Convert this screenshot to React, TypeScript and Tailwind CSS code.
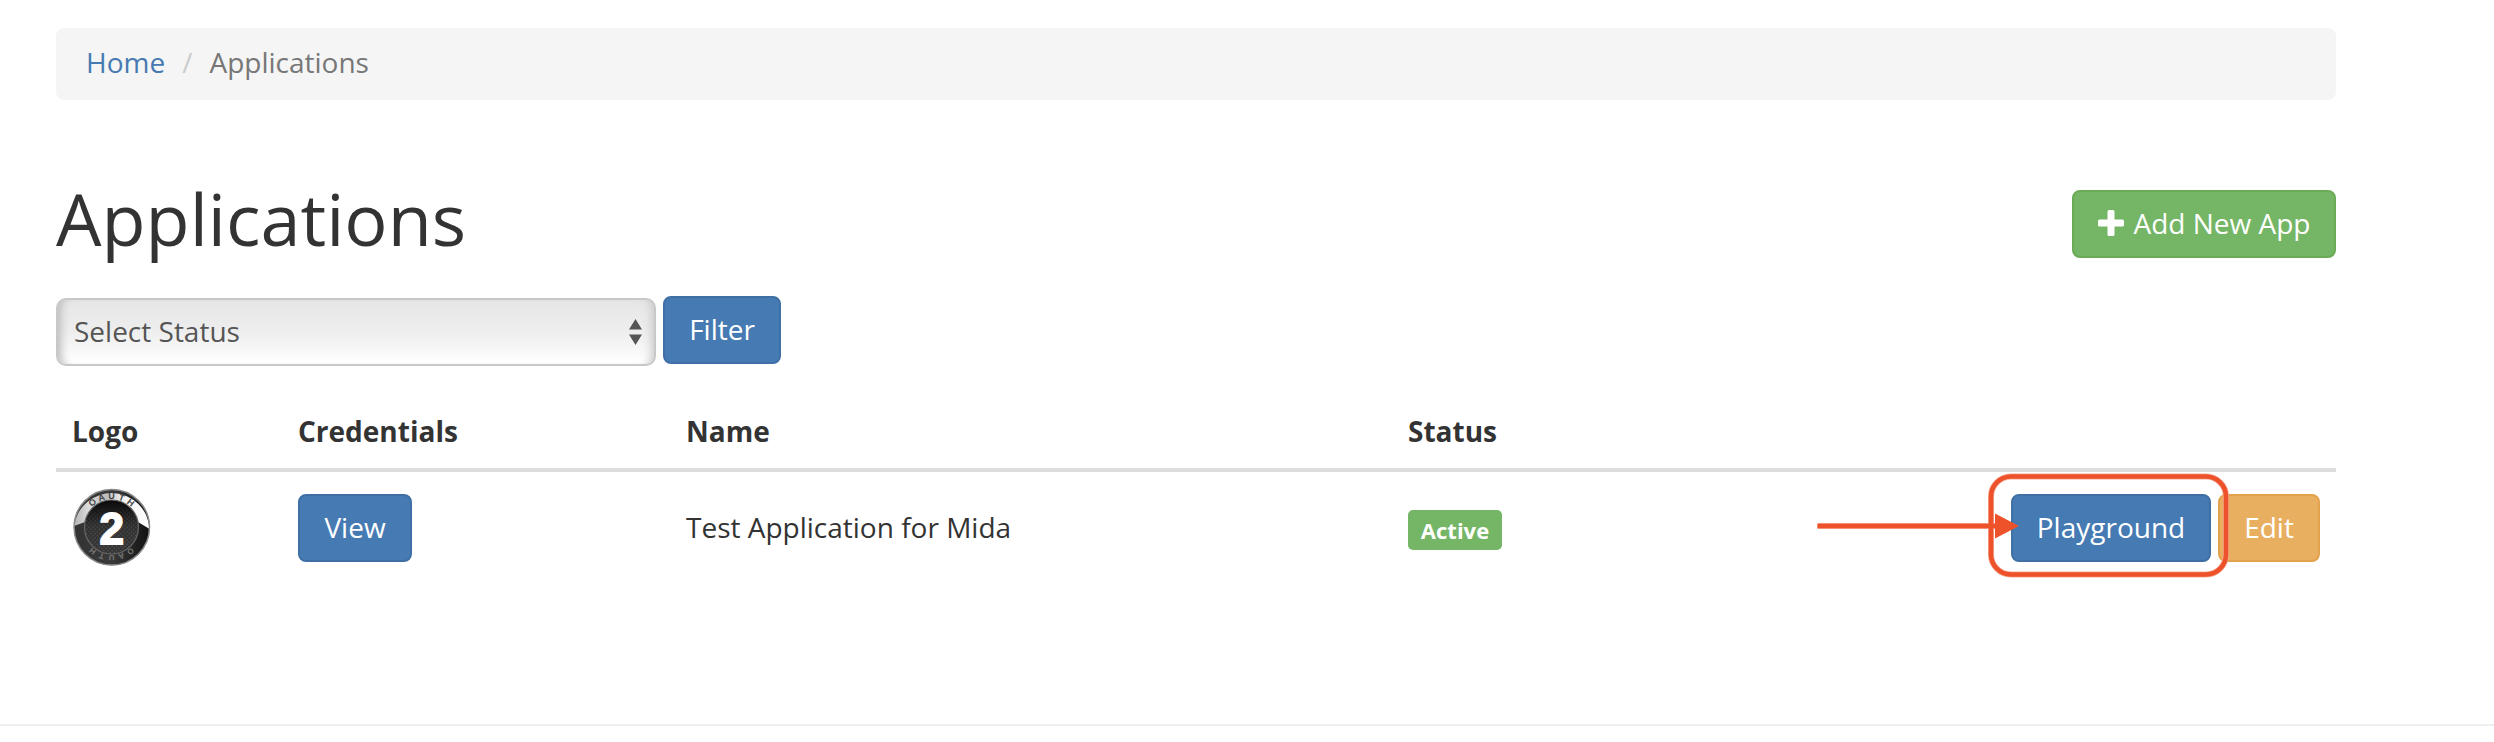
import React from "react";

const btn =
  "inline-flex h-[68px] shrink-0 items-center justify-center rounded-[8px] border-2 pb-[2px] text-[28px] leading-10 text-white";
const blue = "border-[#3f6fa5] bg-[#467ab2]";

const ring = [
  { letter: "O", angle: -38 },
  { letter: "A", angle: -19 },
  { letter: "U", angle: 0 },
  { letter: "T", angle: 19 },
  { letter: "H", angle: 38 },
];

function OAuthLogo() {
  return (
    <svg className="block h-20 w-20 font-['Liberation_Sans',sans-serif]" viewBox="0 0 80 80">
      <defs>
        <linearGradient id="silver" x1="0" y1="0" x2="1" y2="0">
          <stop offset="0" stopColor="#b4b4b4" />
          <stop offset=".2" stopColor="#dedede" />
          <stop offset=".42" stopColor="#bcbcbc" />
          <stop offset=".65" stopColor="#f2f2f2" />
          <stop offset="1" stopColor="#fff" />
        </linearGradient>
        <linearGradient id="band" x1="0" y1="0" x2="1" y2="0">
          <stop offset="0" stopColor="#333" />
          <stop offset=".5" stopColor="#3a3a3a" />
          <stop offset="1" stopColor="#111" />
        </linearGradient>
        <linearGradient id="shade" x1="0" y1="0" x2="0" y2="1">
          <stop offset="0" stopColor="#000" stopOpacity=".85" />
          <stop offset=".5" stopColor="#000" stopOpacity=".1" />
          <stop offset="1" stopColor="#000" stopOpacity="0" />
        </linearGradient>
        <pattern id="mesh" width="3" height="3" patternUnits="userSpaceOnUse" patternTransform="rotate(45)">
          <rect width="3" height="3" fill="#333" />
          <rect width="1.500" height="1.500" fill="#585858" />
        </pattern>
      </defs>
      <circle cx="39.800" cy="39.300" r="38" fill="url(#band)" />
      <path d="M2 38a38 38 0 0 1 75.600 3L66 34H13z" fill="url(#silver)" />
      <circle cx="39.800" cy="39.300" r="37.700" fill="none" stroke="#8a8a8a" strokeWidth="1.500" />
      <circle cx="39.500" cy="39" r="27" fill="url(#mesh)" />
      <circle cx="39.500" cy="39" r="27" fill="url(#shade)" stroke="#666" strokeWidth="1.200" />
      {ring.map(({ letter, angle }) => (
        <text key={`t${letter}`} x="39.500" y="11" fontSize="9" fontWeight="700" fill="#444" textAnchor="middle" transform={`rotate(${angle} 39.5 39)`}>
          {letter}
        </text>
      ))}
      {ring.map(({ letter, angle }) => (
        <text key={`b${letter}`} x="39.500" y="11" fontSize="8" fontWeight="700" fill="#777" textAnchor="middle" transform={`rotate(${angle + 180} 39.5 39)`}>
          {letter}
        </text>
      ))}
      <text x="39.800" y="55.500" fontSize="44" fontWeight="700" fill="#fff" stroke="#fff" strokeWidth="1.800" textAnchor="middle">2</text>
    </svg>
  );
}

export default function App() {
  return (
    <div className="flex h-[742px] w-[2494px] flex-col overflow-hidden bg-white font-['Open_Sans',sans-serif] text-[28px] leading-10 text-[#333]">
      <div className="ml-14 w-[2280px] grow pt-7">
        <nav className="flex h-[72px] items-center rounded-[8px] bg-[#f5f5f5] px-[30px] pb-1">
          <a className="text-[#467ab2]">Home</a>
          <span className="pr-[17px] pl-[17px] text-[#ccc]">/</span>
          <span className="text-[#777]">Applications</span>
        </nav>
        <header className="mt-[78px] flex h-[82px] items-start justify-between">
          <h1 className="text-[72px] leading-[80px] font-normal">Applications</h1>
          <button className={`${btn} mt-[12px] w-[264px] border-[#69ab57] bg-[#74b566]`}>
            <svg className="mr-[10px] h-[26px] w-[26px]" viewBox="0 0 26 26" fill="#fff">
              <path d="M11 0h4a1.500 1.500 0 0 1 1.500 1.500V9.500H24.500A1.500 1.500 0 0 1 26 11v4a1.500 1.500 0 0 1-1.500 1.500H16.500V24.500A1.500 1.500 0 0 1 15 26h-4a1.500 1.500 0 0 1-1.500-1.500V16.500H1.500A1.500 1.500 0 0 1 0 15v-4A1.500 1.500 0 0 1 1.500 9.500H9.500V1.500A1.500 1.500 0 0 1 11 0z" />
            </svg>
            Add New App
          </button>
        </header>
        <form className="mt-[36px] flex h-[72px] items-start">
          <div className="mt-[2px] flex h-[68px] w-[600px] items-center justify-between rounded-[10px] border-2 border-[#c8c8c8] bg-linear-to-b from-[#e6e6e6] via-[#eee] to-white pr-3 pb-[2px] pl-4 text-[#555] shadow-[inset_10px_0_8px_-7px_#bbb,inset_-10px_0_8px_-7px_#ccc]">
            <span>Select Status</span>
            <svg className="mt-[2px] h-[26px] w-[13px]" viewBox="0 0 13 26" fill="#555">
              <path d="M6.500 0l6.500 10.500H0zM0 15.500h13L6.500 26z" />
            </svg>
          </div>
          <button type="button" className={`${btn} ml-[7px] w-[118px] ${blue}`}>Filter</button>
        </form>
        <div className="grid grid-cols-[226px_388px_722px_1fr] px-4 pt-[43px] pb-[17px] font-bold">
          <span>Logo</span>
          <span>Credentials</span>
          <span>Name</span>
          <span>Status</span>
        </div>
        <div className="grid grid-cols-[226px_388px_722px_94px_1fr] items-center border-t-4 border-[#ddd] px-4 py-4">
          <OAuthLogo />
          <div className="flex">
            <button className={`${btn} w-[114px] ${blue}`}>View</button>
          </div>
          <span className="pb-[2px]">Test Application for Mida</span>
          <span className="mt-1 flex h-10 items-center justify-center rounded-[5px] bg-[#74b566] text-[22px] leading-none font-bold text-white">Active</span>
          <div className="relative flex justify-end gap-[7px]">
            <button className={`${btn} w-[200px] ${blue}`}>Playground</button>
            <button className={`${btn} w-[102px] border-[#e3a34c] bg-[#e8af60]`}>Edit</button>
            <svg className="absolute -top-[22px] right-[88px] h-[108px] w-[418px]" viewBox="0 0 418 108" fill="none">
              <g stroke="#f6a893" strokeWidth="6">
                <rect x="177" y="4.500" width="235" height="98" rx="20" />
                <path d="M3.500 54H184" />
              </g>
              <g stroke="#ed522b" strokeWidth="4.500">
                <rect x="177" y="4.500" width="235" height="98" rx="20" />
                <path d="M3.500 54H184" />
              </g>
              <path d="M181 41.500l24 12.500-24 12.500z" fill="#ed522b" />
            </svg>
          </div>
        </div>
      </div>
      <div className="mb-[16px] h-[2px] shrink-0 bg-[#eee]" />
    </div>
  );
}
